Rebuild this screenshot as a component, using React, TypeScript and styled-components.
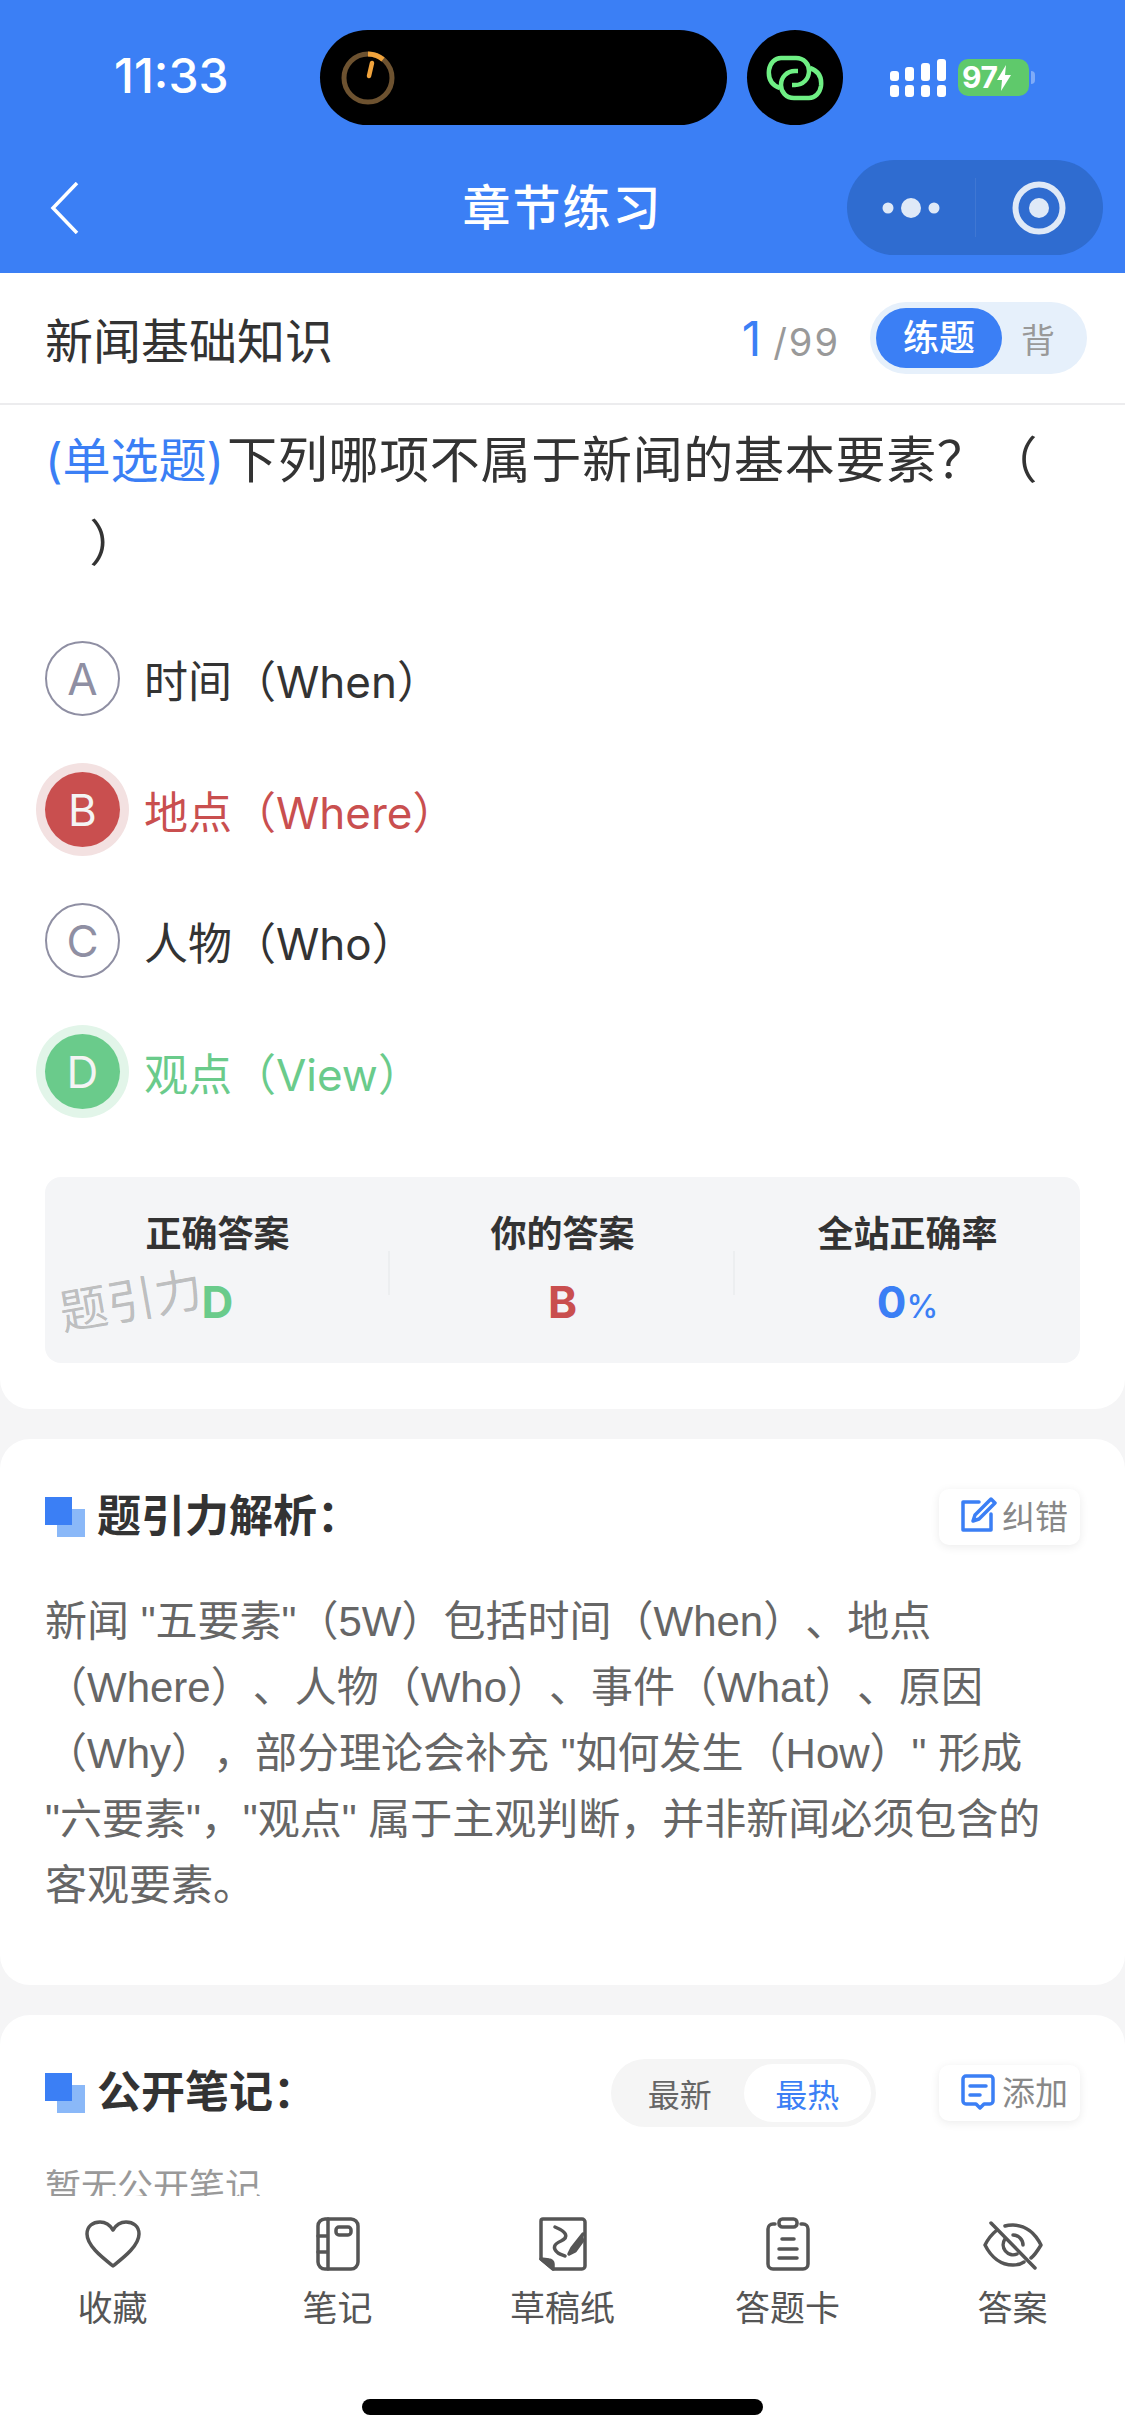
import React from 'react';
import styled, { createGlobalStyle } from 'styled-components';

const GlobalStyle = createGlobalStyle`
  html, body {
    margin: 0;
    padding: 0;
    background: #f5f5f6;
  }
  * {
    box-sizing: border-box;
  }
`;

const FONT = `Inter, "Noto Sans CJK SC", "Noto Sans", sans-serif`;
const BLUE = '#3b7ff5';
const RED = '#c94f4f';
const GREEN = '#6acb8b';

const Page = styled.div`
  width: 1125px;
  height: 2436px;
  display: flex;
  flex-direction: column;
  overflow: hidden;
  background: #f5f5f6;
  font-family: ${FONT};
  color: #333;
`;

const TopBar = styled.header`
  height: 273px;
  flex: none;
  background: ${BLUE};
  color: #fff;
  display: flex;
  flex-direction: column;
`;

const StatusRow = styled.div`
  height: 160px;
  padding: 30px 0 0 114px;
  display: flex;
  align-items: flex-start;
`;

const Clock = styled.div`
  width: 206px;
  height: 95px;
  line-height: 92px;
  font-size: 48px;
  font-weight: 500;
`;

const Island = styled.div`
  width: 407px;
  height: 95px;
  border-radius: 48px;
  background: #000;
  display: flex;
  align-items: center;
  padding-left: 20px;
`;

const IslandDot = styled.div`
  width: 96px;
  height: 95px;
  margin-left: 20px;
  border-radius: 50%;
  background: #000;
  display: flex;
  align-items: center;
  justify-content: center;
`;

const StatusIcons = styled.div`
  height: 95px;
  margin-left: 47px;
  display: flex;
  align-items: center;
  gap: 12px;
`;

const Battery = styled.div`
  width: 71px;
  height: 37px;
  border-radius: 10px;
  background: #5fc96b;
  color: #fff;
  font-size: 30px;
  font-weight: 700;
  line-height: 37px;
  display: flex;
  align-items: center;
  padding-left: 4px;
  letter-spacing: -0.5px;
  position: relative;

  &::after {
    content: '';
    position: absolute;
    right: -6px;
    top: 12px;
    width: 4px;
    height: 13px;
    border-radius: 0 4px 4px 0;
    background: rgba(255, 255, 255, 0.35);
  }
`;

const NavRow = styled.div`
  height: 95px;
  display: grid;
  grid-template-columns: 1fr auto 1fr;
  align-items: center;
  padding: 0 22px;
`;

const BackIcon = styled.svg`
  margin-left: 28px;
`;

const NavTitle = styled.div`
  font-size: 48px;
  line-height: 95px;
  height: 95px;
  font-weight: 500;
  letter-spacing: 2px;
`;

const Capsule = styled.div`
  justify-self: end;
  width: 256px;
  height: 95px;
  border-radius: 48px;
  background: #2f6cd0;
  display: grid;
  grid-template-columns: 1fr 1fr;
  align-items: center;
  justify-items: center;
  position: relative;

  &::after {
    content: '';
    position: absolute;
    left: 128px;
    top: 18px;
    bottom: 18px;
    width: 1px;
    background: rgba(255, 255, 255, 0.08);
  }
`;

const Content = styled.main`
  flex: 1;
  min-height: 0;
  overflow: hidden;
  display: flex;
  flex-direction: column;
  gap: 30px;
`;

const QuestionCard = styled.section`
  flex: none;
  height: 1136px;
  background: #fff;
  border-radius: 0 0 30px 30px;
  display: flex;
  flex-direction: column;
`;

const SubHeader = styled.div`
  height: 132px;
  flex: none;
  border-bottom: 2px solid #ececee;
  display: flex;
  align-items: center;
  padding: 0 38px 0 45px;
`;

const ChapterName = styled.div`
  flex: 1;
  font-size: 48px;
  color: #333;
`;

const Progress = styled.div`
  font-size: 38px;
  color: #999;
  display: flex;
  align-items: baseline;
  margin-right: 30px;
  letter-spacing: 2px;
`;

const ProgressNow = styled.span`
  font-size: 48px;
  color: ${BLUE};
  margin-right: 10px;
`;

const ModeSwitch = styled.div`
  width: 217px;
  height: 72px;
  border-radius: 36px;
  background: #e6f0fb;
  padding: 6px;
  display: flex;
  align-items: center;
`;

const ModeActive = styled.div`
  width: 126px;
  height: 60px;
  border-radius: 30px;
  background: ${BLUE};
  color: #fff;
  font-size: 36px;
  font-weight: 500;
  text-align: center;
  line-height: 60px;
`;

const ModeIdle = styled.div`
  margin-left: 19px;
  font-size: 34px;
  color: #999;
`;

const Question = styled.div`
  margin: 14px 45px 0;
  font-size: 50px;
  line-height: 83px;
  color: #333;
  letter-spacing: 0.7px;
`;

const QuestionType = styled.span`
  color: ${BLUE};
  font-size: 48px;
  letter-spacing: 0;
  margin-right: 3px;
`;

const Options = styled.div`
  margin: 56px 45px 0;
  display: flex;
  flex-direction: column;
  gap: 56px;
`;

type OptionState = 'normal' | 'wrong' | 'right';

const stateColor = (state: OptionState) =>
  state === 'wrong' ? RED : state === 'right' ? GREEN : '#333';

const OptionRow = styled.div<{ $state: OptionState }>`
  height: 75px;
  display: flex;
  align-items: center;
  gap: 24px;
  font-size: 44px;
  color: ${props => stateColor(props.$state)};
`;

const OptionBadge = styled.div<{ $state: OptionState }>`
  width: 75px;
  height: 75px;
  flex: none;
  border-radius: 50%;
  display: flex;
  align-items: center;
  justify-content: center;
  font-size: 44px;
  ${props =>
    props.$state === 'normal'
      ? 'border: 2px solid #8f8fa3; color: #8f8fa3;'
      : `background: ${stateColor(props.$state)}; color: #f4f4f4; box-shadow: 0 0 0 9px ${
          props.$state === 'wrong' ? '#f3e1e1' : '#e2f5e9'
        };`}
`;

const StatsBox = styled.div`
  position: relative;
  margin: 68px 45px 0;
  height: 186px;
  border-radius: 16px;
  background: #f4f5f7;
  display: grid;
  grid-template-columns: repeat(3, 1fr);
  align-items: center;
`;

const Stat = styled.div<{ $divider?: boolean }>`
  height: 100%;
  padding-top: 32px;
  display: flex;
  flex-direction: column;
  align-items: center;
  gap: 18px;
  position: relative;

  ${props =>
    props.$divider &&
    `&::after {
      content: '';
      position: absolute;
      right: 0;
      top: 74px;
      height: 44px;
      width: 2px;
      background: #eceef0;
    }`}
`;

const StatLabel = styled.div`
  font-size: 36px;
  line-height: 50px;
  font-weight: 700;
  color: #333;
`;

const StatValue = styled.div<{ $color: string }>`
  font-size: 44px;
  line-height: 50px;
  font-weight: 700;
  color: ${props => props.$color};
`;

const StatUnit = styled.span`
  font-size: 32px;
  font-weight: 500;
`;

const Watermark = styled.div`
  position: absolute;
  left: 14px;
  top: 94px;
  font-size: 48px;
  line-height: 60px;
  color: rgba(0, 0, 0, 0.24);
  transform: rotate(-10deg);
`;

const Card = styled.section<{ $height: number }>`
  flex: none;
  height: ${props => props.$height}px;
  background: #fff;
  border-radius: 30px;
  padding: 50px 45px 0;
`;

const CardHead = styled.div`
  height: 55px;
  display: flex;
  align-items: center;
`;

const HeadTitle = styled.h2`
  flex: 1;
  margin: 0 0 0 12px;
  padding-bottom: 8px;
  font-size: 44px;
  font-weight: 700;
  color: #333;
`;

const ChipButton = styled.div`
  height: 56px;
  padding: 0 12px 4px 20px;
  border-radius: 10px;
  background: #fff;
  box-shadow: 0 2px 10px rgba(0, 0, 0, 0.08);
  display: flex;
  align-items: center;
  gap: 5px;
  font-size: 33px;
  color: #888;
`;

const Analysis = styled.p`
  margin: 45px 0 0;
  font-family: "Liberation Sans", "Noto Sans CJK SC", sans-serif;
  font-size: 42px;
  line-height: 66px;
  color: #666;
  text-spacing-trim: space-all;
`;

const SortTabs = styled.div`
  height: 68px;
  width: 265px;
  margin-right: 63px;
  border-radius: 34px;
  background: #f5f5f5;
  display: grid;
  grid-template-columns: 1fr 1fr;
  padding: 5px;
`;

const SortTab = styled.div<{ $active?: boolean }>`
  border-radius: 29px;
  display: flex;
  align-items: center;
  justify-content: center;
  font-size: 32px;
  color: ${props => (props.$active ? BLUE : '#666')};
  background: ${props => (props.$active ? '#fff' : 'transparent')};
`;

const EmptyNote = styled.div`
  margin-top: 42px;
  font-size: 36px;
  line-height: 50px;
  color: #999;
`;

const BottomBar = styled.footer`
  flex: none;
  height: 240px;
  background: #fff;
  display: flex;
  flex-direction: column;
  align-items: center;
`;

const ToolRow = styled.nav`
  width: 100%;
  display: grid;
  grid-template-columns: repeat(5, 1fr);
  padding-top: 16px;
`;

const Tool = styled.div`
  display: flex;
  flex-direction: column;
  align-items: center;
  gap: 7px;
  font-size: 35px;
  line-height: 50px;
  color: #555;
`;

const HomeBar = styled.div`
  margin-top: 66px;
  width: 401px;
  height: 16px;
  border-radius: 8px;
  background: #000;
`;

const SquaresIcon = () => (
  <svg width="40" height="40" viewBox="0 0 40 40">
    <rect x="12" y="12" width="28" height="28" fill="#8ab8f8" />
    <rect x="0" y="0" width="27" height="28" fill={BLUE} />
  </svg>
);

const ToolIcon: React.FC<{ children: React.ReactNode }> = ({ children }) => (
  <svg width="64" height="64" viewBox="0 0 64 64" fill="none" stroke="#555" strokeWidth="3.5" strokeLinecap="round" strokeLinejoin="round">
    {children}
  </svg>
);

const options: { key: string; text: string; state: OptionState }[] = [
  { key: 'A', text: '时间（When）', state: 'normal' },
  { key: 'B', text: '地点（Where）', state: 'wrong' },
  { key: 'C', text: '人物（Who）', state: 'normal' },
  { key: 'D', text: '观点（View）', state: 'right' },
];

export default function App() {
  return (
    <Page>
      <GlobalStyle />
      <TopBar>
        <StatusRow>
          <Clock>11:33</Clock>
          <Island>
            <svg width="56" height="56" viewBox="0 0 56 56" fill="none">
              <circle cx="28" cy="28" r="24" stroke="#6d5230" strokeWidth="5" />
              <path d="M28 4a24 24 0 0 1 15 5.5" stroke="#f0a33c" strokeWidth="5" />
              <path d="M32 13l-3 13" stroke="#f0a33c" strokeWidth="4.5" strokeLinecap="round" />
            </svg>
          </Island>
          <IslandDot>
            <svg width="58" height="46" viewBox="0 0 58 46" fill="none" stroke="#6fef84" strokeWidth="4.5">
              <path d="M14 33C5 30 2 24 3 15 4 8 9 3 15 3h15c8 0 13 6 13 13 0 8-6 14-14 14h-3" />
              <path d="M44 13c9 3 12 9 11 18-1 7-6 12-12 12H28c-8 0-13-6-13-13 0-8 6-14 14-14h3" />
            </svg>
          </IslandDot>
          <StatusIcons>
            <svg width="56" height="38" viewBox="0 0 56 38" fill="#fff">
              <rect x="0" y="12" width="9" height="10" rx="3" />
              <rect x="0" y="26" width="9" height="12" rx="3" />
              <rect x="15" y="8" width="9" height="14" rx="3" />
              <rect x="15" y="26" width="9" height="12" rx="3" />
              <rect x="31" y="4" width="9" height="18" rx="3" />
              <rect x="31" y="26" width="9" height="12" rx="3" />
              <rect x="47" y="0" width="9" height="22" rx="3" />
              <rect x="47" y="26" width="9" height="12" rx="3" />
            </svg>
            <Battery>
              97
              <svg width="14" height="28" viewBox="0 0 14 26" fill="#fff">
                <path d="M9 0L0 15h5l-1 11 10-16H8z" />
              </svg>
            </Battery>
          </StatusIcons>
        </StatusRow>
        <NavRow>
          <BackIcon width="29" height="52" viewBox="0 0 29 52" fill="none" stroke="#fff" strokeWidth="3.5">
            <path d="M27 1L3 26l24 25" />
          </BackIcon>
          <NavTitle>章节练习</NavTitle>
          <Capsule>
            <svg width="58" height="24" viewBox="0 0 58 24" fill="#dfe9f7">
              <circle cx="6" cy="12" r="5.5" />
              <circle cx="29" cy="12" r="10" />
              <circle cx="52" cy="12" r="5.5" />
            </svg>
            <svg width="54" height="54" viewBox="0 0 54 54" fill="none">
              <circle cx="27" cy="27" r="23.5" stroke="#dfe9f7" strokeWidth="6" />
              <circle cx="27" cy="27" r="10" fill="#dfe9f7" />
            </svg>
          </Capsule>
        </NavRow>
      </TopBar>

      <Content>
        <QuestionCard>
          <SubHeader>
            <ChapterName>新闻基础知识</ChapterName>
            <Progress>
              <ProgressNow>1</ProgressNow>/99
            </Progress>
            <ModeSwitch>
              <ModeActive>练题</ModeActive>
              <ModeIdle>背</ModeIdle>
            </ModeSwitch>
          </SubHeader>
          <Question>
            <QuestionType>(单选题)</QuestionType>下列哪项不属于新闻的基本要素？（
            <br />
            &nbsp;&nbsp;&nbsp;）
          </Question>
          <Options>
            {options.map(option => (
              <OptionRow key={option.key} $state={option.state}>
                <OptionBadge $state={option.state}>{option.key}</OptionBadge>
                {option.text}
              </OptionRow>
            ))}
          </Options>
          <StatsBox>
            <Stat $divider>
              <StatLabel>正确答案</StatLabel>
              <StatValue $color={GREEN}>D</StatValue>
            </Stat>
            <Stat $divider>
              <StatLabel>你的答案</StatLabel>
              <StatValue $color={RED}>B</StatValue>
            </Stat>
            <Stat>
              <StatLabel>全站正确率</StatLabel>
              <StatValue $color={BLUE}>
                0<StatUnit>%</StatUnit>
              </StatValue>
            </Stat>
            <Watermark>题引力</Watermark>
          </StatsBox>
        </QuestionCard>

        <Card $height={546}>
          <CardHead>
            <SquaresIcon />
            <HeadTitle>题引力解析：</HeadTitle>
            <ChipButton>
              <svg width="38" height="38" viewBox="0 0 38 38" fill="none" stroke={BLUE} strokeWidth="3.5" strokeLinecap="round" strokeLinejoin="round">
                <path d="M20 6H4v28h28V18" />
                <path d="M32 3l4 4-16 16-6 2 2-6z" />
              </svg>
              纠错
            </ChipButton>
          </CardHead>
          <Analysis>
            新闻 "五要素"（5W）包括时间（When）、地点（Where）、人物（Who）、事件（What）、原因（Why），部分理论会补充 "如何发生（How）" 形成 "六要素"，"观点" 属于主观判断，并非新闻必须包含的客观要素。
          </Analysis>
        </Card>

        <Card $height={400}>
          <CardHead>
            <SquaresIcon />
            <HeadTitle>公开笔记：</HeadTitle>
            <SortTabs>
              <SortTab>最新</SortTab>
              <SortTab $active>最热</SortTab>
            </SortTabs>
            <ChipButton>
              <svg width="38" height="38" viewBox="0 0 38 38" fill="none" stroke={BLUE} strokeWidth="3.5" strokeLinecap="round" strokeLinejoin="round">
                <path d="M7 4h24a3 3 0 0 1 3 3v22a3 3 0 0 1-3 3h-6l-4 4-4-4H7a3 3 0 0 1-3-3V7a3 3 0 0 1 3-3z" />
                <path d="M11 14h16M11 23h10" />
              </svg>
              添加
            </ChipButton>
          </CardHead>
          <EmptyNote>暂无公开笔记</EmptyNote>
        </Card>
      </Content>

      <BottomBar>
        <ToolRow>
          <Tool>
            <ToolIcon>
              <path d="M32 54C22 46 6 34 6 22 6 14 12 10 19 10c5 0 10 3 13 8 3-5 8-8 13-8 7 0 13 4 13 12 0 12-16 24-26 32z" />
            </ToolIcon>
            收藏
          </Tool>
          <Tool>
            <ToolIcon>
              <rect x="12" y="7" width="40" height="50" rx="7" />
              <path d="M22 7v50M12 24h10M12 40h10" />
              <rect x="30" y="15" width="15" height="8" rx="3" />
            </ToolIcon>
            笔记
          </Tool>
          <Tool>
            <ToolIcon>
              <path d="M12 7h39a3 3 0 0 1 3 3v44a3 3 0 0 1-3 3H22L10 47V9a2 2 0 0 1 2-2z" />
              <path d="M10 47l8 1a4 4 0 0 1 4 4v5z" fill="#555" />
              <path d="M24 15c12 5 14 10 6 14-7 3-9 7-3 12 3 2 5 2 7 3" />
              <path d="M52 22L41 36l-3 6 6-3 8-11" fill="#555" />
            </ToolIcon>
            草稿纸
          </Tool>
          <Tool>
            <ToolIcon>
              <path d="M19 12h-2a5 5 0 0 0-5 5v35a5 5 0 0 0 5 5h30a5 5 0 0 0 5-5V17a5 5 0 0 0-5-5h-2" />
              <rect x="23" y="7" width="18" height="8" rx="3.5" />
              <path d="M26 27h12M23 37h18M23 46h18" />
            </ToolIcon>
            答题卡
          </Tool>
          <Tool>
            <ToolIcon>
              <path d="M16 18C11 22 7 27 4 33c6 12 16 20 28 20 4 0 8-1 11-3" />
              <path d="M24 14c3-1 5-1 8-1 12 0 22 8 28 20-3 5-6 10-10 13" />
              <path d="M24 27a10 10 0 0 0 12 15" />
              <path d="M32 23a10 10 0 0 1 10 10" />
              <path d="M10 11l44 45" />
            </ToolIcon>
            答案
          </Tool>
        </ToolRow>
        <HomeBar />
      </BottomBar>
    </Page>
  );
}
